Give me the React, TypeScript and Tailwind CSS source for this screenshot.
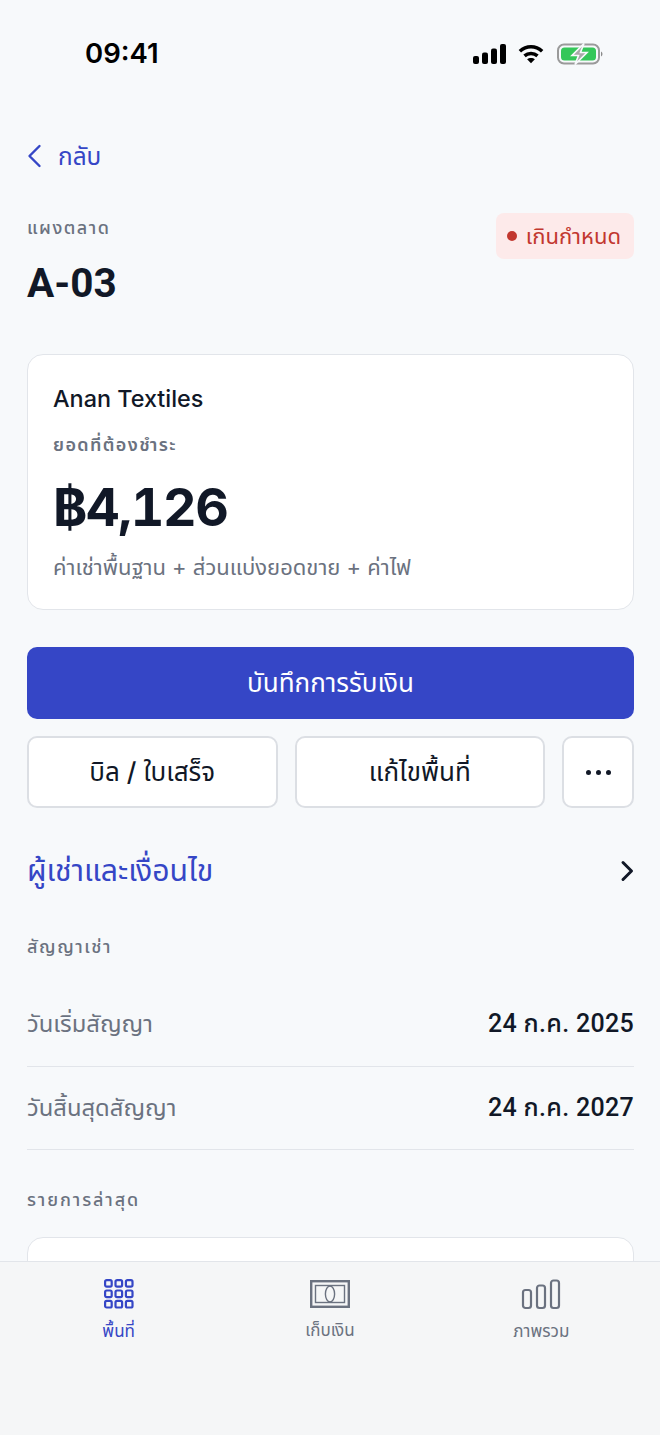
const font = "[font-family:Inter,'Noto_Sans_Thai','Noto_Sans',sans-serif]";

function StatusIcons() {
  return (
    <div className="mt-[7px] flex items-center">
      <svg width="33" height="20" viewBox="0 0 33 20" fill="#000">
        <rect x="0" y="12" width="6" height="8" rx="2" />
        <rect x="9" y="8.5" width="6" height="11.5" rx="2" />
        <rect x="18" y="4.5" width="6" height="15.5" rx="2" />
        <rect x="27" y="0" width="6" height="20" rx="2" />
      </svg>
      <svg width="26" height="20" viewBox="0 0 28 20" fill="none" stroke="#000" strokeWidth="3.8" className="ml-[12px]">
        <path d="M2 7 C9 0.5 19 0.5 26 7" />
        <path d="M7 12 C11 8.5 17 8.5 21 12" />
        <path d="M14 20 L9.8 15.6 C12 13.8 16 13.8 18.2 15.6 Z" fill="#000" stroke="none" />
      </svg>
      <svg width="46" height="22" viewBox="0 0 46 22" className="ml-[13px]">
        <rect x="1" y="1.5" width="41" height="19" rx="6" fill="none" stroke="#9a9a9a" strokeWidth="2" />
        <rect x="4" y="4.5" width="35" height="13" rx="3.5" fill="#34c759" />
        <path d="M44 8.5 C46 9.5 46 12.5 44 13.5 Z" fill="#8a8a8a" />
        <path d="M27 0.5 L15 12.5 H21.5 L18 21.5 L30 9.5 H23.5 Z" fill="#a8a8a8" stroke="#f7f9fb" strokeWidth="1.6" />
      </svg>
    </div>
  );
}

function GridIcon() {
  const cells = [0, 1, 2, 3, 4, 5, 6, 7, 8];
  return (
    <svg width="32" height="32" viewBox="0 0 32 32" fill="none" stroke="#3546c6" strokeWidth="2.2">
      {cells.map((i) => (
        <rect key={i} x={2.1 + (i % 3) * 10.4} y={2.1 + Math.floor(i / 3) * 10.4} width="6.6" height="6.6" rx="1.6" />
      ))}
    </svg>
  );
}

function CashIcon() {
  return (
    <svg width="40" height="28" viewBox="0 0 40 28" fill="none" stroke="#6b7280">
      <rect x="1.2" y="1.2" width="37.6" height="25.6" strokeWidth="2.4" />
      <rect x="5.5" y="5.5" width="29" height="17" strokeWidth="1.4" />
      <ellipse cx="20" cy="14" rx="4.6" ry="8" strokeWidth="1.4" />
    </svg>
  );
}

function BarsIcon() {
  return (
    <svg width="40" height="32" viewBox="0 0 40 32" fill="none" stroke="#6b7280" strokeWidth="2.2">
      <rect x="2" y="12" width="8" height="18" rx="2.5" />
      <rect x="16" y="7.5" width="8" height="22.5" rx="2.5" />
      <rect x="30" y="2.5" width="8" height="27.5" rx="2.5" />
    </svg>
  );
}

function Row({ label, value }: { label: string; value: string }) {
  return (
    <div className="flex h-[84px] items-center justify-between border-b border-[#e2e5ea] pb-[1px] last:h-[83px] last:pb-0">
      <span className="text-[23.8px] text-[#6b7280]">{label}</span>
      <span className="[font-family:Roboto,'Noto_Sans_Thai',sans-serif] text-[25px] font-medium tracking-[0.3px] text-[#111827]">{value}</span>
    </div>
  );
}

export default function App() {
  return (
    <div className={`relative h-[1435px] w-[660px] overflow-hidden bg-[#f7f9fb] ${font}`}>
      <div className="flex h-[132px] items-start justify-between pl-[85px] pr-[57px] pt-[36px]">
        <span className="text-[27.5px] leading-[34px] font-semibold text-black">09:41</span>
        <StatusIcons />
      </div>

      <div className="pl-[27px] pr-[26px]">
        <div className="flex h-[48px] items-center gap-[16px] text-[#3546c6]">
          <svg width="15" height="24" viewBox="0 0 15 24" fill="none" stroke="#3546c6" strokeWidth="2.4" strokeLinecap="round" strokeLinejoin="round">
            <path d="M12.5 2 L2.5 12 L12.5 22" />
          </svg>
          <span className="text-[24.4px] leading-none font-[450]">กลับ</span>
        </div>

        <div className="mt-[36px] flex items-start justify-between">
          <div>
            <div className="text-[18px] leading-[24px] font-medium tracking-[1.5px] text-[#6b7280]">แผงตลาด</div>
            <div className="mt-[19px] [font-family:Roboto,sans-serif] text-[40.5px] leading-[48px] font-bold text-[#111827]">A-03</div>
          </div>
          <div className="mt-[-3px] flex h-[46px] items-center gap-[9px] rounded-[8px] bg-[#fdeaea] pl-[11px] pr-[13px] text-[22px] font-[450] text-[#c2372f]">
            <span className="h-[10px] w-[10px] rounded-full bg-[#c2372f]" />
            เกินกำหนด
          </div>
        </div>

        <div className="mt-[47px] h-[256px] rounded-[16px] border border-[#e2e5ea] bg-white pl-[25px] pr-[26px] pt-[27px]">
          <div className="text-[23.4px] leading-[34px] font-medium text-[#111827]">Anan Textiles</div>
          <div className="mt-[17px] text-[18px] leading-[24px] font-semibold tracking-[1.4px] text-[#6b7280]">ยอดที่ต้องชำระ</div>
          <div className="mt-[20px] text-[52px] leading-[62px] font-bold tracking-[-1.4px] tabular-nums text-[#111827]">฿4,126</div>
          <div className="mt-[13px] text-[22px] leading-[30px] text-[#6b7280]">ค่าเช่าพื้นฐาน + ส่วนแบ่งยอดขาย + ค่าไฟ</div>
        </div>

        <button className="mt-[37px] h-[72px] w-full rounded-[10px] bg-[#3546c6] pb-[2px] text-[26px] font-[450] text-white">
          บันทึกการรับเงิน
        </button>

        <div className="mt-[17px] flex gap-[17px]">
          <button className="h-[72px] flex-1 rounded-[10px] border-2 border-[#dcdfe4] bg-white pb-[2px] text-[26px] font-[450] text-[#111827]">
            บิล / ใบเสร็จ
          </button>
          <button className="h-[72px] flex-1 rounded-[10px] border-2 border-[#dcdfe4] bg-white pb-[2px] text-[26px] font-[450] text-[#111827]">
            แก้ไขพื้นที่
          </button>
          <button className="flex h-[72px] w-[72px] items-center justify-center gap-[5px] rounded-[10px] border-2 border-[#dcdfe4] bg-white">
            <span className="h-[5px] w-[5px] rounded-full bg-[#111827]" />
            <span className="h-[5px] w-[5px] rounded-full bg-[#111827]" />
            <span className="h-[5px] w-[5px] rounded-full bg-[#111827]" />
          </button>
        </div>

        <div className="mt-[35px] flex h-[56px] items-center justify-between">
          <span className="text-[30.2px] font-[450] text-[#3546c6]">ผู้เช่าและเงื่อนไข</span>
          <svg width="14" height="22" viewBox="0 0 14 22" fill="none" stroke="#111827" strokeWidth="3" strokeLinecap="round" strokeLinejoin="round">
            <path d="M3 2.5 L11.5 11 L3 19.5" />
          </svg>
        </div>

        <div className="mt-[36px] text-[18px] leading-[24px] font-medium tracking-[1.6px] text-[#6b7280]">สัญญาเช่า</div>
        <div className="mt-[24px]">
          <Row label="วันเริ่มสัญญา" value="24 ก.ค. 2025" />
          <Row label="วันสิ้นสุดสัญญา" value="24 ก.ค. 2027" />
        </div>

        <div className="mt-[38px] text-[18px] leading-[24px] font-medium tracking-[1.9px] text-[#6b7280]">รายการล่าสุด</div>
        <div className="mt-[25px] h-[120px] rounded-[16px] border border-[#e2e5ea] bg-white" />
      </div>

      <nav className="absolute inset-x-0 bottom-0 flex h-[174px] items-start border-t border-[#e2e5ea] bg-[#f5f6f7] px-[13px] pt-[16px]">
        <div className="flex flex-1 flex-col items-center">
          <GridIcon />
          <span className="mt-[8px] text-[17px] leading-[26px] font-[450] text-[#3546c6]">พื้นที่</span>
        </div>
        <div className="flex flex-1 flex-col items-center pt-[2px]">
          <CashIcon />
          <span className="mt-[9px] text-[17px] leading-[26px] text-[#6b7280]">เก็บเงิน</span>
        </div>
        <div className="flex flex-1 flex-col items-center">
          <BarsIcon />
          <span className="mt-[8px] text-[17px] leading-[26px] text-[#6b7280]">ภาพรวม</span>
        </div>
      </nav>
    </div>
  );
}
